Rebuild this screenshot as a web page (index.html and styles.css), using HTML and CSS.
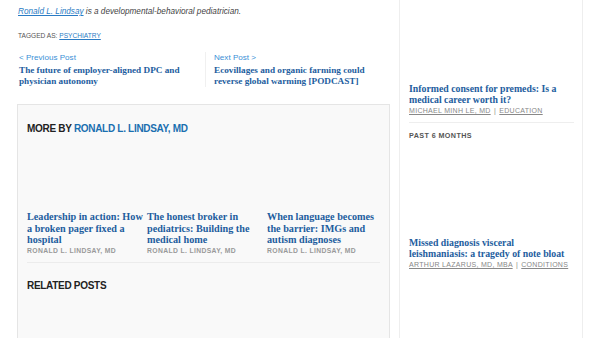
FILE: index.html
```html
<!DOCTYPE html>
<html>
<head>
<meta charset="utf-8">
<link rel="stylesheet" href="styles.css">
</head>
<body>
<div class="page">
  <main class="main">
    <p class="bio"><a href="#">Ronald L. Lindsay</a> is a developmental-behavioral pediatrician.</p>
    <p class="tags">TAGGED AS: <a href="#">PSYCHIATRY</a></p>
    <nav class="postnav">
      <div class="navcol">
        <a class="navlabel" href="#">&lt; Previous Post</a>
        <a class="navtitle" href="#">The future of employer-aligned DPC and physician autonomy</a>
      </div>
      <div class="navcol navnext">
        <a class="navlabel" href="#">Next Post &gt;</a>
        <a class="navtitle" href="#">Ecovillages and organic farming could reverse global warming [PODCAST]</a>
      </div>
    </nav>
    <section class="box">
      <h3 class="boxhead">MORE BY <a href="#">RONALD L. LINDSAY, MD</a></h3>
      <div class="cards">
        <div class="card">
          <div class="thumb"></div>
          <a class="ctitle" href="#">Leadership in action: How a broken pager fixed a hospital</a>
          <div class="cmeta">RONALD L. LINDSAY, MD</div>
        </div>
        <div class="card">
          <div class="thumb"></div>
          <a class="ctitle" href="#">The honest broker in pediatrics: Building the medical home</a>
          <div class="cmeta">RONALD L. LINDSAY, MD</div>
        </div>
        <div class="card">
          <div class="thumb"></div>
          <a class="ctitle" href="#">When language becomes the barrier: IMGs and autism diagnoses</a>
          <div class="cmeta">RONALD L. LINDSAY, MD</div>
        </div>
      </div>
      <hr class="rule">
      <h3 class="boxhead related">RELATED POSTS</h3>
    </section>
  </main>
  <aside class="side">
    <div class="sitem first">
      <a class="stitle" href="#">Informed consent for premeds: Is a medical career worth it?</a>
      <div class="smeta"><a href="#">MICHAEL MINH LE, MD</a> <span class="sep">|</span> <a href="#">EDUCATION</a></div>
    </div>
    <h4 class="shead">PAST 6 MONTHS</h4>
    <div class="sitem second">
      <a class="stitle" href="#">Missed diagnosis visceral leishmaniasis: a tragedy of note bloat</a>
      <div class="smeta"><a href="#">ARTHUR LAZARUS, MD, MBA</a> <span class="sep">|</span> <a href="#">CONDITIONS</a></div>
    </div>
  </aside>
</div>
</body>
</html>
```
FILE: styles.css
```css
* { box-sizing: border-box; }
html, body { margin: 0; padding: 0; background: #fff; }
body { font-family: "Liberation Sans", Arial, sans-serif; color: #444; overflow: hidden; height: 338px; }
a { text-decoration: none; }

.page { display: flex; width: 600px; }
.main { width: 399px; padding: 0 9px 0 17px; }
.side {
  width: 184px;
  border-left: 1px solid #eee;
  border-right: 1px solid #eee;
  padding: 83px 8px 0 9px;
  min-height: 338px;
}

.bio { margin: 6px 0 0 1px; font-size: 8.2px; font-style: italic; line-height: 12px; color: #444; }
.bio a { color: #2a7bc4; text-decoration: underline; }

.tags { margin: 13px 0 0 1px; font-size: 6.6px; line-height: 10px; color: #555; }
.tags a { color: #2a7bc4; text-decoration: underline; }

.postnav { display: flex; margin-top: 11px; }
.navcol { width: 188px; display: flex; flex-direction: column; padding-left: 2px; }
.navnext { border-left: 1px solid #f0f0f0; padding-left: 8px; width: 185px; }
.navlabel { font-size: 8.1px; color: #3a8fd6; line-height: 12px; }
.navtitle { font-family: "Liberation Serif", serif; font-weight: bold; font-size: 9.2px; line-height: 11px; color: #1d5d9e; margin-top: 1px; }

.box {
  margin-top: 17px;
  background: #f9f9f9;
  border: 1px solid #e5e5e5;
  padding: 18px 9px 40px 9px;
  min-height: 240px;
}
.boxhead { margin: 0; font-size: 10px; line-height: 12px; font-weight: bold; color: #222; letter-spacing: -0.3px; }
.boxhead a { color: #1a6fb0; }

.cards { display: grid; grid-template-columns: repeat(3, 116px); column-gap: 4px; margin-top: 13px; }
.card { display: flex; flex-direction: column; }
.thumb { height: 63px; }
.ctitle { font-family: "Liberation Serif", serif; font-weight: bold; font-size: 10.2px; line-height: 11.5px; color: #1d5d9e; }
.cmeta { font-size: 6.8px; font-weight: bold; letter-spacing: 0.35px; color: #999; margin-top: 0; line-height: 10px; }

.rule { border: 0; border-top: 1px solid #ececec; margin: 6px 0 0 0; }
.related { margin-top: 17px; }

.sitem { display: flex; flex-direction: column; }
.stitle { font-family: "Liberation Serif", serif; font-weight: bold; font-size: 9.8px; line-height: 11px; color: #1d5d9e; }
.smeta { font-size: 7px; letter-spacing: 0.3px; color: #888; margin-top: 1px; line-height: 10px; }
.smeta a { color: #888; text-decoration: underline; }
.sep { margin: 0 1px; }
.first { padding-bottom: 6px; border-bottom: 1px solid #eee; }
.shead { margin: 8px 0 0 0; font-size: 7.2px; letter-spacing: 0.4px; font-weight: bold; color: #555; line-height: 10px; }
.second { margin-top: 96px; }
```
